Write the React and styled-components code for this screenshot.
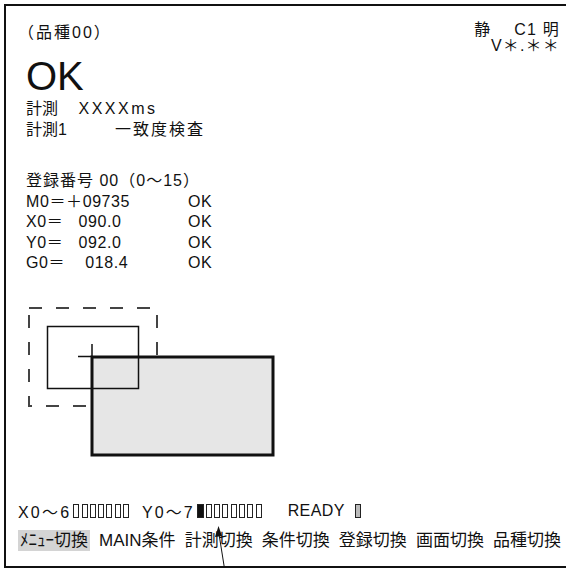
import React from 'react';
import styled, { createGlobalStyle } from 'styled-components';

const GlobalStyle = createGlobalStyle`
  html, body {
    margin: 0;
    padding: 0;
    background: #fff;
  }
  body {
    font-family: "Liberation Sans", "Noto Sans CJK JP", sans-serif;
    color: #111;
    font-size: 16px;
  }
`;

const Frame = styled.div`
  position: relative;
  box-sizing: border-box;
  margin: 4px 0 0 4px;
  width: 562px;
  height: 564px;
  border-top: 2px solid #111;
  border-left: 2px solid #111;
  border-bottom: 2px solid #111;
  display: flex;
  flex-direction: column;
`;

const Header = styled.div`
  display: flex;
  justify-content: space-between;
  padding: 16px 6px 0 12px;
`;

const Title = styled.div`
  line-height: 20px;
  padding-top: 1px;
  letter-spacing: 2px;
`;

const Status = styled.div`
  text-align: right;
  line-height: 16px;
  white-space: pre;
  letter-spacing: 1.2px;
`;

const Upper = styled.div`
  padding-left: 20px;
`;

const Big = styled.div`
  font-size: 40px;
  line-height: 43px;
  margin-top: 1px;
`;

const Line = styled.div`
  line-height: 21px;
  white-space: pre;
`;

const Spaced = styled.span`
  letter-spacing: ${(p) => p.$spacing ?? 2.5}px;
  margin-left: ${(p) => p.$indent || 0}px;
`;

const Registry = styled.div`
  margin-top: 31px;
`;

const Row = styled.div`
  display: grid;
  grid-template-columns: 162px auto;
  line-height: 20.5px;
  white-space: pre;
  letter-spacing: ${(p) => p.$spacing ?? 0.6}px;
`;

const Canvas = styled.div`
  flex: 1;
`;

const Diagram = styled.svg`
  display: block;
  margin: 27px 0 0 14px;
`;

const StatusLine = styled.div`
  display: flex;
  align-items: center;
  height: 22px;
  padding-left: 12px;
  white-space: pre;
`;

const Cells = styled.span`
  display: inline-flex;
  gap: 2.3px;
  margin: 0 ${(p) => p.$right || 0}px 0 ${(p) => p.$left || 0}px;
`;

const Cell = styled.span`
  box-sizing: border-box;
  width: ${(p) => (p.$fill === 'black' ? 7 : 6)}px;
  height: 14px;
  border: 1px solid #222;
  background: ${(p) => (p.$fill === 'black' ? '#111' : p.$fill === 'grey' ? '#bbb' : '#fff')};
`;

const Menu = styled.div`
  display: flex;
  justify-content: space-between;
  padding: 0 5px 0 12px;
  margin: 8px 0 15px;
  font-size: 17px;
  line-height: 21px;
`;

const MenuItem = styled.span`
  padding: 0 ${(p) => (p.$active ? 2 : 0)}px;
  background: ${(p) => (p.$active ? '#d4d4d4' : 'transparent')};
`;

const Pointer = styled.svg`
  position: absolute;
  left: 200px;
  top: 510px;
  overflow: visible;
`;

const menu = ['ﾒﾆｭｰ切換', 'MAIN条件', '計測切換', '条件切換', '登録切換', '画面切換', '品種切換'];

const rows = [
  ['M0＝＋09735', 'OK'],
  ['X0＝   090.0', 'OK'],
  ['Y0＝   092.0', 'OK'],
  ['G0＝    018.4', 'OK'],
];

export default function App() {
  return (
    <>
      <GlobalStyle />
      <Frame>
        <Header>
          <Title>（品種00）</Title>
          <Status>
            <div>静　 C1 明</div>
            <div>V＊.＊＊</div>
          </Status>
        </Header>
        <Upper>
          <Big>OK</Big>
          <Line>
            計測　 <Spaced>XXXXms</Spaced>
          </Line>
          <Line>
            計測1<Spaced $spacing={2} $indent={48}>一致度検査</Spaced>
          </Line>
          <Registry>
            <Row $spacing={1}>
              <span>登録番号 00（0〜15）</span>
            </Row>
            {rows.map(([label, res]) => (
              <Row key={label}>
                <span>{label}</span>
                <span>{res}</span>
              </Row>
            ))}
          </Registry>
        </Upper>
        <Canvas>
          <Diagram width="270" height="160" viewBox="20 300 270 160">
            <rect x="29" y="307" width="128" height="98" fill="none" stroke="#444" strokeWidth="2" strokeDasharray="13 14" />
            <rect x="92" y="356" width="181" height="98" fill="#e6e6e6" stroke="#111" strokeWidth="3" />
            <rect x="47.5" y="325.5" width="91" height="62" fill="none" stroke="#111" strokeWidth="1.5" />
            <path d="M92 343 V356 M78 355.5 H92" stroke="#111" strokeWidth="1.5" fill="none" />
          </Diagram>
        </Canvas>
        <StatusLine>
          <Spaced $spacing={2.2}>X0〜6</Spaced>
          <Cells $left={2} $right={13}>
            {Array.from({ length: 7 }, (_, i) => (
              <Cell key={i} />
            ))}
          </Cells>
          <Spaced $spacing={2}>Y0〜7</Spaced>
          <Cells $left={2} $right={26}>
            {Array.from({ length: 8 }, (_, i) => (
              <Cell key={i} $fill={i === 0 ? 'black' : undefined} />
            ))}
          </Cells>
          <Spaced $spacing={0.4}>READY</Spaced>
          <Cells $left={10}>
            <Cell $fill="grey" />
          </Cells>
        </StatusLine>
        <Menu>
          {menu.map((m, i) => (
            <MenuItem key={m} $active={i === 0}>
              {m}
            </MenuItem>
          ))}
        </Menu>
        <Pointer width="30" height="62" viewBox="200 510 30 62">
          <path d="M213 528 L220 572" stroke="#111" strokeWidth="1" fill="none" />
          <path d="M212.5 520 L209 531 L216 530 Z" fill="#111" />
        </Pointer>
      </Frame>
    </>
  );
}
